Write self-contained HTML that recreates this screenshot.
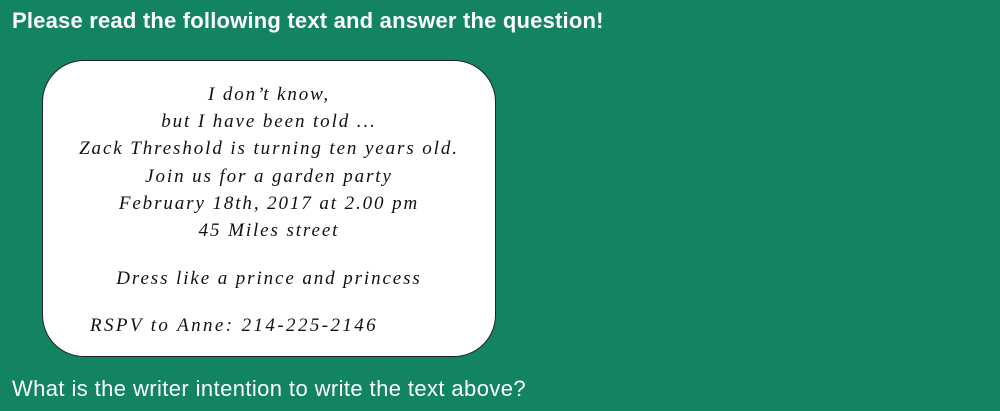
<!DOCTYPE html>
<html><head><style>
body{margin:0;width:1000px;height:411px;background:#138461;position:relative;overflow:hidden;font-family:"Liberation Sans",sans-serif}
.h{position:absolute;left:12px;top:8px;color:#fff;font-weight:bold;font-size:22px;letter-spacing:0.2px}
.q{position:absolute;left:12px;top:376px;color:#fff;font-size:22px;letter-spacing:0.4px}
.card{position:absolute;left:42px;top:60px;width:454px;height:297px;background:#fff;border:1px solid #222;border-radius:42px;box-sizing:border-box}
.t{position:absolute;left:42px;width:454px;text-align:center;font-family:"Liberation Serif",serif;font-style:italic;font-size:19px;letter-spacing:1.9px;color:#111;line-height:20px}
</style></head><body>
<div class="h">Please read the following text and answer the question!</div>
<div class="card"></div>
<div class="t" style="top:85px">I don’t know,</div>
<div class="t" style="top:112px">but I have been told ...</div>
<div class="t" style="top:139px">Zack Threshold is turning ten years old.</div>
<div class="t" style="top:167px">Join us for a garden party</div>
<div class="t" style="top:194px">February 18th, 2017 at 2.00 pm</div>
<div class="t" style="top:221px">45 Miles street</div>
<div class="t" style="top:269px">Dress like a prince and princess</div>
<div class="t" style="top:316px;text-align:left;left:90px;width:auto;letter-spacing:2.4px">RSPV to Anne: 214-225-2146</div>
<div class="q">What is the writer intention to write the text above?</div>
</body></html>
